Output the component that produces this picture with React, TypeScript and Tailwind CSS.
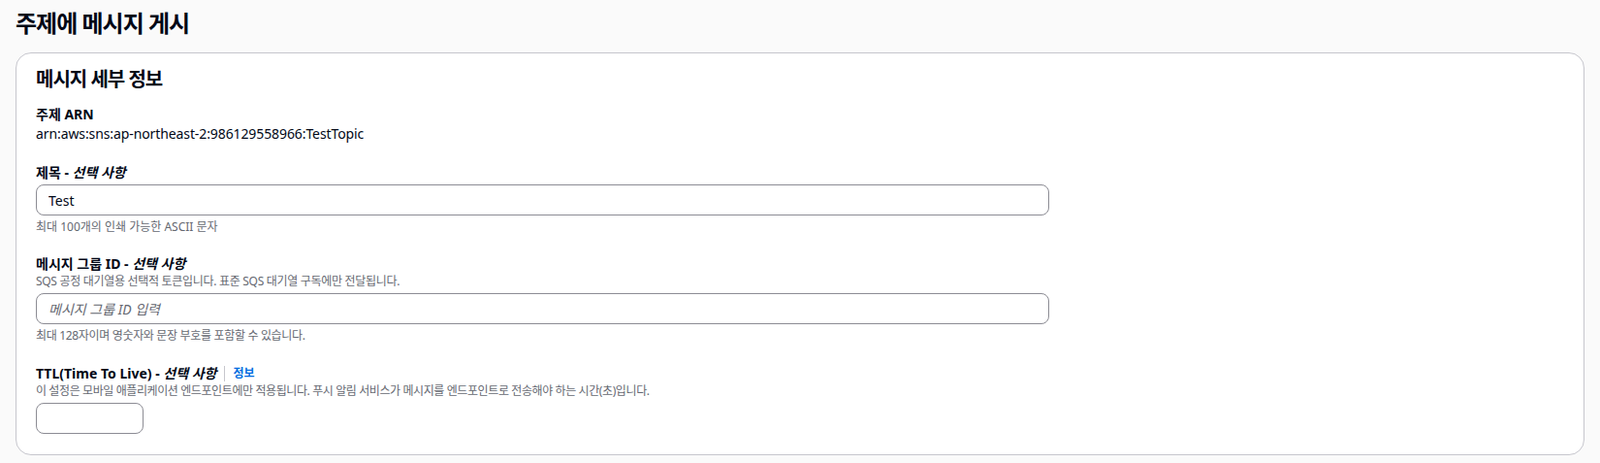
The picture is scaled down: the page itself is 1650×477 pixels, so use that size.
export default function App() {
  return (
    <div
      className="min-h-[477px] bg-[#fafafa] px-[16px] pt-[8px] text-[#000716]"
      style={{ fontFamily: '"Noto Sans", "Noto Sans CJK KR", sans-serif' }}
    >
      <h1 className="text-[24px] font-bold leading-[32px] tracking-[-1px] mb-[14px]">
        주제에 메시지 게시
      </h1>
      <section className="rounded-[16px] border border-[#c6c6cd] bg-white px-[20px] pt-[13px] pb-[21px]">
        <h2 className="text-[20px] font-bold leading-[28px] tracking-[-1px] mb-[12px]">메시지 세부 정보</h2>

        <div className="mb-[20px]">
          <div className="text-[14px] font-bold leading-[20px]">주제 ARN</div>
          <div className="text-[14px] leading-[20px] tracking-[-0.1px]">
            arn:aws:sns:ap-northeast-2:986129558966:TestTopic
          </div>
        </div>

        <div className="mb-[20px]">
          <div className="text-[14px] font-bold leading-[20px] mb-[2px]">
            제목 - <i>선택 사항</i>
          </div>
          <input
            defaultValue="Test"
            className="block w-[1045px] h-[32px] rounded-[8px] border border-[#8c8c94] px-[12px] text-[14px] outline-none"
          />
          <div className="text-[12px] leading-[16px] text-[#656871] mt-[4px]">
            최대 100개의 인쇄 가능한 ASCII 문자
          </div>
        </div>

        <div className="mb-[21px]">
          <div className="text-[14px] font-bold leading-[20px]">
            메시지 그룹 ID - <i>선택 사항</i>
          </div>
          <div className="text-[12px] leading-[16px] text-[#656871] tracking-[-0.3px] mb-[4px]">
            SQS 공정 대기열용 선택적 토큰입니다. 표준 SQS 대기열 구독에만 전달됩니다.
          </div>
          <input
            placeholder="메시지 그룹 ID 입력"
            className="block w-[1045px] h-[32px] rounded-[8px] border border-[#8c8c94] px-[12px] text-[14px] outline-none placeholder:italic placeholder:text-[#656871]"
          />
          <div className="text-[12px] leading-[16px] text-[#656871] tracking-[-0.33px] mt-[4px]">
            최대 128자이며 영숫자와 문장 부호를 포함할 수 있습니다.
          </div>
        </div>

        <div>
          <div className="flex items-center text-[14px] font-bold leading-[20px]">
            <span>
              TTL(Time To Live) - <i>선택 사항</i>
            </span>
            <span className="mx-[8px] h-[16px] w-px bg-[#c6c6cd]" />
            <span className="text-[12px] text-[#006ce0]">정보</span>
          </div>
          <div className="text-[12px] leading-[16px] text-[#656871] tracking-[-0.4px] mb-[4px]">
            이 설정은 모바일 애플리케이션 엔드포인트에만 적용됩니다. 푸시 알림 서비스가 메시지를 엔드포인트로 전송해야 하는 시간(초)입니다.
          </div>
          <input className="block w-[111px] h-[32px] rounded-[8px] border border-[#8c8c94] px-[12px] text-[14px] outline-none" />
        </div>
      </section>
    </div>
  )
}
